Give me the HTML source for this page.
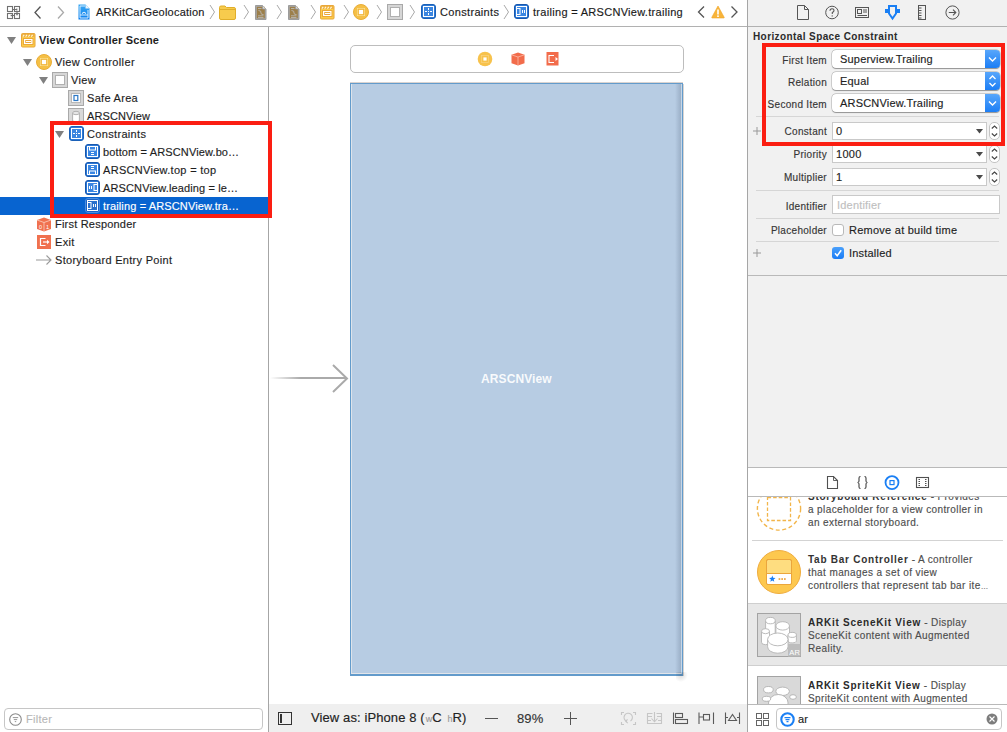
<!DOCTYPE html><html><head><meta charset="utf-8"><style>
html,body{margin:0;padding:0;}
body{width:1007px;height:732px;overflow:hidden;position:relative;background:#fff;font-family:"Liberation Sans",sans-serif;}
div,svg{box-sizing:border-box;}
div{-webkit-text-stroke:0.15px currentColor;}
b{-webkit-text-stroke:0;}
</style></head><body>
<div style="position:absolute;left:748px;top:0px;width:259px;height:732px;background:#f1f1f1"></div>
<div style="position:absolute;left:0px;top:26px;width:747px;height:1px;background:#b1b1b1"></div>
<div style="position:absolute;left:748px;top:26px;width:259px;height:1px;background:#b1b1b1"></div>
<div style="position:absolute;left:747px;top:0px;width:1px;height:732px;background:#a6a6a6"></div>
<div style="position:absolute;left:268px;top:27px;width:1px;height:705px;background:#a6a6a6"></div>
<div style="position:absolute;left:269px;top:704px;width:478px;height:28px;background:#efefef"></div>
<div style="position:absolute;left:748px;top:275px;width:259px;height:1px;background:#b9b9b9"></div>
<div style="position:absolute;left:748px;top:467px;width:259px;height:1px;background:#b9b9b9"></div>
<div style="position:absolute;left:748px;top:468px;width:259px;height:28px;background:#ffffff"></div>
<div style="position:absolute;left:748px;top:496px;width:259px;height:1px;background:#b9b9b9"></div>
<div style="position:absolute;left:748px;top:497px;width:259px;height:207px;background:#ffffff"></div>
<div style="position:absolute;left:748px;top:704px;width:259px;height:1px;background:#b9b9b9"></div>
<div style="position:absolute;left:748px;top:705px;width:259px;height:27px;background:#ffffff"></div>
<svg style="position:absolute;left:6px;top:5px" width="16" height="16" viewBox="0 0 16 16"><g fill="none" stroke="#707070" stroke-width="1.1"><rect x="1.5" y="1.5" width="5" height="5"/><rect x="8.5" y="1.5" width="5" height="5"/><rect x="1.5" y="8.5" width="5" height="5"/><rect x="8.5" y="8.5" width="5" height="5"/><path d="M6.5 4.5 H10.8 M10.8 3.6 V5.4 M11 6.5 V9.8 M10.2 9.8 H11.8 M8.5 10.5 H5.2 M5.2 9.7 V11.3"/></g></svg>
<svg style="position:absolute;left:32px;top:5px" width="12" height="16" viewBox="0 0 12 16"><path d="M8.5 1.5 L3 7.5 L8.5 13.5" fill="none" stroke="#555" stroke-width="1.3"/></svg>
<svg style="position:absolute;left:55px;top:5px" width="12" height="16" viewBox="0 0 12 16"><path d="M3 1.5 L8.5 7.5 L3 13.5" fill="none" stroke="#aaa" stroke-width="1.3"/></svg>
<svg style="position:absolute;left:78px;top:4px" width="12" height="16" viewBox="0 0 12 16"><defs><linearGradient id="fg" x1="0" y1="0" x2="0" y2="1"><stop offset="0" stop-color="#3aa8f2"/><stop offset="1" stop-color="#0a80f0"/></linearGradient></defs><path d="M0.5 0.5 H7.5 L11.5 4.5 V15.5 H0.5 Z" fill="url(#fg)"/><path d="M7.5 0.5 V4.5 H11.5" fill="#e8f2fb"/><path d="M2 14 V2 H7 M10 6 V14 H2 M2 11 H10" fill="none" stroke="#eaf5ff" stroke-width="0.9"/><path d="M4.2 9.6 Q6 6.8 7.8 9.6" fill="none" stroke="#eaf5ff" stroke-width="1.1"/></svg>
<div style="position:absolute;left:96px;top:7px;font-size:11px;line-height:11px;color:#1a1a1a;font-weight:normal;letter-spacing:0.21px;white-space:nowrap;">ARKitCarGeolocation</div>
<svg style="position:absolute;left:209px;top:4px" width="7" height="16" viewBox="0 0 7 16"><path d="M1 1 L5.5 8 L1 15" fill="none" stroke="#a9a9a9" stroke-width="1"/></svg>
<svg style="position:absolute;left:219px;top:5px" width="17" height="15" viewBox="0 0 17 15"><path d="M0.5 2.5 Q0.5 1 2 1 H6 L7.5 2.5 H15 Q16.5 2.5 16.5 4 V13 Q16.5 14.5 15 14.5 H2 Q0.5 14.5 0.5 13 Z" fill="#f7cb4d" stroke="#e0ae2a"/><path d="M0.5 4.5 H16.5" stroke="#e0ae2a"/></svg>
<svg style="position:absolute;left:243px;top:4px" width="7" height="16" viewBox="0 0 7 16"><path d="M1 1 L5.5 8 L1 15" fill="none" stroke="#a9a9a9" stroke-width="1"/></svg>
<svg style="position:absolute;left:255px;top:5px" width="12" height="15" viewBox="0 0 12 15"><path d="M0.5 0.5 H7.5 L11 4 V14.5 H0.5 Z" fill="#a9a9a9" stroke="#9c9c9c"/><rect x="1.8" y="1.8" width="8" height="11.5" fill="#9c7f4a"/><path d="M3 3.5 H6.5 M3 10.8 H8.5 M3 12.5 H8.5" stroke="#b9b6b0" stroke-width="0.9"/><path d="M3.5 5.5 Q6.5 5.5 6 8 Q5.8 9.8 8.5 9.5" fill="none" stroke="#b9b6b0" stroke-width="0.9"/><path d="M7.5 0.5 V4 H11" fill="#d8d8d8" stroke="#9c9c9c" stroke-width="0.8"/></svg>
<svg style="position:absolute;left:276px;top:4px" width="7" height="16" viewBox="0 0 7 16"><path d="M1 1 L5.5 8 L1 15" fill="none" stroke="#a9a9a9" stroke-width="1"/></svg>
<svg style="position:absolute;left:288px;top:5px" width="12" height="15" viewBox="0 0 12 15"><path d="M0.5 0.5 H7.5 L11 4 V14.5 H0.5 Z" fill="#a9a9a9" stroke="#9c9c9c"/><rect x="1.8" y="1.8" width="8" height="11.5" fill="#9c7f4a"/><path d="M3 3.5 H6.5 M3 10.8 H8.5 M3 12.5 H8.5" stroke="#b9b6b0" stroke-width="0.9"/><path d="M3.5 5.5 Q6.5 5.5 6 8 Q5.8 9.8 8.5 9.5" fill="none" stroke="#b9b6b0" stroke-width="0.9"/><path d="M7.5 0.5 V4 H11" fill="#d8d8d8" stroke="#9c9c9c" stroke-width="0.8"/></svg>
<svg style="position:absolute;left:310px;top:4px" width="7" height="16" viewBox="0 0 7 16"><path d="M1 1 L5.5 8 L1 15" fill="none" stroke="#a9a9a9" stroke-width="1"/></svg>
<svg style="position:absolute;left:320px;top:5px" width="15" height="15" viewBox="0 0 15 15"><rect x="0.5" y="0.5" width="13.5" height="13.5" rx="1" fill="#fccd4a" stroke="#e8a63a"/><rect x="1" y="1" width="12.5" height="3" fill="#eeb03e"/><path d="M1.8 3.6 L3.2 1.8 M4.6 3.6 L6 1.8 M7.4 3.6 L8.8 1.8 M10.2 3.6 L11.6 1.8" stroke="#fff6dc" stroke-width="1.1"/><rect x="2.5" y="5.5" width="9.5" height="6" fill="#fff" stroke="#eba73a"/><rect x="4.75" y="7.5" width="5" height="2" fill="#fff" stroke="#eba73a"/></svg>
<svg style="position:absolute;left:343px;top:4px" width="7" height="16" viewBox="0 0 7 16"><path d="M1 1 L5.5 8 L1 15" fill="none" stroke="#a9a9a9" stroke-width="1"/></svg>
<svg style="position:absolute;left:353px;top:4px" width="16" height="16" viewBox="0 0 16 16"><circle cx="8" cy="8" r="7.5" fill="#f5c046" stroke="#e9ad37" stroke-width="1"/><rect x="4" y="4" width="8" height="8" fill="#fde7a1"/><rect x="5.2" y="5.2" width="5.6" height="5.6" fill="none" stroke="#f0b43c" stroke-width="1.2"/><rect x="6" y="6" width="4" height="4" fill="#fff"/></svg>
<svg style="position:absolute;left:376px;top:4px" width="7" height="16" viewBox="0 0 7 16"><path d="M1 1 L5.5 8 L1 15" fill="none" stroke="#a9a9a9" stroke-width="1"/></svg>
<svg style="position:absolute;left:387px;top:4px" width="16" height="16" viewBox="0 0 16 16"><rect x="0.5" y="0.5" width="15" height="15" fill="#d6d6d6" stroke="#a9a9a9"/><rect x="3.5" y="3.5" width="9" height="9" fill="#fff" stroke="#b0b0b0"/></svg>
<svg style="position:absolute;left:409px;top:4px" width="7" height="16" viewBox="0 0 7 16"><path d="M1 1 L5.5 8 L1 15" fill="none" stroke="#a9a9a9" stroke-width="1"/></svg>
<svg style="position:absolute;left:421px;top:4px" width="15" height="15" viewBox="0 0 15 15"><rect x="0.5" y="0.5" width="14" height="14" rx="2.5" fill="#2e7ad6" stroke="#1b61b8"/><rect x="2.5" y="2.5" width="10" height="10" fill="#3b86e0" stroke="#fff"/><path d="M7.5 4 V6 M7.5 9 V11 M4 7.5 H6 M9 7.5 H11" stroke="#fff" stroke-width="1"/><rect x="7" y="7" width="1" height="1" fill="#fff"/></svg>
<div style="position:absolute;left:440px;top:7px;font-size:11px;line-height:11px;color:#1a1a1a;font-weight:normal;letter-spacing:0.33px;white-space:nowrap;">Constraints</div>
<svg style="position:absolute;left:503px;top:4px" width="7" height="16" viewBox="0 0 7 16"><path d="M1 1 L5.5 8 L1 15" fill="none" stroke="#a9a9a9" stroke-width="1"/></svg>
<svg style="position:absolute;left:514px;top:4px" width="15" height="15" viewBox="0 0 15 15"><rect x="0.5" y="0.5" width="14" height="14" rx="2.5" fill="#2c78d6" stroke="#1858ae"/><rect x="2.5" y="2.5" width="10" height="10" fill="#3a86e2" stroke="#fff"/><rect x="2.5" y="4.5" width="3.5" height="6" fill="none" stroke="#fff"/><path d="M8.5 6 V9 M10.5 6 V9" stroke="#fff"/></svg>
<div style="position:absolute;left:533px;top:7px;font-size:11px;line-height:11px;color:#1a1a1a;font-weight:normal;letter-spacing:0.3px;white-space:nowrap;">trailing = ARSCNView.trailing</div>
<svg style="position:absolute;left:696px;top:5px" width="11" height="16" viewBox="0 0 11 16"><path d="M8 1.5 L2.5 7 L8 12.5" fill="none" stroke="#555" stroke-width="1.3"/></svg>
<svg style="position:absolute;left:711px;top:5px" width="14" height="14" viewBox="0 0 14 14"><path d="M7 1 L13.2 12.3 Q13.5 13 12.7 13 H1.3 Q0.5 13 0.8 12.3 Z" fill="#f8b43a" stroke="#f0a62a" stroke-width="0.6"/><rect x="6.2" y="4.5" width="1.6" height="5" fill="#fff"/><rect x="6.2" y="10.4" width="1.6" height="1.6" fill="#fff"/></svg>
<svg style="position:absolute;left:729px;top:5px" width="11" height="16" viewBox="0 0 11 16"><path d="M2.5 1.5 L8 7 L2.5 12.5" fill="none" stroke="#555" stroke-width="1.3"/></svg>
<svg style="position:absolute;left:7px;top:37px" width="9" height="7" viewBox="0 0 9 7"><path d="M0 0 H9 L4.5 7 Z" fill="#808080"/></svg>
<svg style="position:absolute;left:21px;top:33px" width="15" height="15" viewBox="0 0 15 15"><rect x="0.5" y="0.5" width="13.5" height="13.5" rx="1" fill="#fccd4a" stroke="#e8a63a"/><rect x="1" y="1" width="12.5" height="3" fill="#eeb03e"/><path d="M1.8 3.6 L3.2 1.8 M4.6 3.6 L6 1.8 M7.4 3.6 L8.8 1.8 M10.2 3.6 L11.6 1.8" stroke="#fff6dc" stroke-width="1.1"/><rect x="2.5" y="5.5" width="9.5" height="6" fill="#fff" stroke="#eba73a"/><rect x="4.75" y="7.5" width="5" height="2" fill="#fff" stroke="#eba73a"/></svg>
<div style="position:absolute;left:39px;top:35px;font-size:11px;line-height:11px;color:#1e1e1e;font-weight:bold;letter-spacing:0.2px;white-space:nowrap;-webkit-text-stroke:0;">View Controller Scene</div>
<svg style="position:absolute;left:23px;top:59px" width="9" height="7" viewBox="0 0 9 7"><path d="M0 0 H9 L4.5 7 Z" fill="#808080"/></svg>
<svg style="position:absolute;left:36px;top:54px" width="16" height="16" viewBox="0 0 16 16"><circle cx="8" cy="8" r="7.5" fill="#f5c046" stroke="#e9ad37" stroke-width="1"/><rect x="4" y="4" width="8" height="8" fill="#fde7a1"/><rect x="5.2" y="5.2" width="5.6" height="5.6" fill="none" stroke="#f0b43c" stroke-width="1.2"/><rect x="6" y="6" width="4" height="4" fill="#fff"/></svg>
<div style="position:absolute;left:55px;top:57px;font-size:11px;line-height:11px;color:#1e1e1e;font-weight:normal;letter-spacing:0.37px;white-space:nowrap;">View Controller</div>
<svg style="position:absolute;left:39px;top:77px" width="9" height="7" viewBox="0 0 9 7"><path d="M0 0 H9 L4.5 7 Z" fill="#808080"/></svg>
<svg style="position:absolute;left:52px;top:72px" width="16" height="16" viewBox="0 0 16 16"><rect x="0.5" y="0.5" width="15" height="15" fill="#d6d6d6" stroke="#a9a9a9"/><rect x="3.5" y="3.5" width="9" height="9" fill="#fff" stroke="#b0b0b0"/></svg>
<div style="position:absolute;left:71px;top:75px;font-size:11px;line-height:11px;color:#1e1e1e;font-weight:normal;letter-spacing:0.37px;white-space:nowrap;">View</div>
<svg style="position:absolute;left:68px;top:90px" width="16" height="16" viewBox="0 0 16 16"><rect x="0.5" y="0.5" width="15" height="15" fill="#d6d6d6" stroke="#a9a9a9"/><rect x="3.5" y="3.5" width="9" height="9" fill="#fff" stroke="#b8b8b8"/><rect x="6" y="5.5" width="3.8" height="5" fill="none" stroke="#2b78c6" stroke-width="1.2"/></svg>
<div style="position:absolute;left:87px;top:93px;font-size:11px;line-height:11px;color:#1e1e1e;font-weight:normal;letter-spacing:0.3px;white-space:nowrap;">Safe Area</div>
<svg style="position:absolute;left:68px;top:108px" width="16" height="16" viewBox="0 0 16 16"><rect x="0.5" y="0.5" width="15" height="15" fill="#d9d9d9" stroke="#a9a9a9"/><path d="M4.6 5 V13 Q8 15 11.4 13 V5" fill="#fff" stroke="#aaa" stroke-width="0.9"/><ellipse cx="8" cy="5" rx="3.4" ry="1.7" fill="#e6e6e6" stroke="#aaa" stroke-width="0.9"/></svg>
<div style="position:absolute;left:87px;top:111px;font-size:11px;line-height:11px;color:#1e1e1e;font-weight:normal;letter-spacing:0.1px;white-space:nowrap;">ARSCNView</div>
<div style="position:absolute;left:0px;top:197px;width:268px;height:18px;background:#0864d0"></div>
<svg style="position:absolute;left:55px;top:131px" width="9" height="7" viewBox="0 0 9 7"><path d="M0 0 H9 L4.5 7 Z" fill="#808080"/></svg>
<svg style="position:absolute;left:69px;top:126px" width="15" height="15" viewBox="0 0 15 15"><rect x="0.5" y="0.5" width="14" height="14" rx="2.5" fill="#2e7ad6" stroke="#1b61b8"/><rect x="2.5" y="2.5" width="10" height="10" fill="#3b86e0" stroke="#fff"/><path d="M7.5 4 V6 M7.5 9 V11 M4 7.5 H6 M9 7.5 H11" stroke="#fff" stroke-width="1"/><rect x="7" y="7" width="1" height="1" fill="#fff"/></svg>
<div style="position:absolute;left:87px;top:129px;font-size:11px;line-height:11px;color:#1e1e1e;font-weight:normal;letter-spacing:0.33px;white-space:nowrap;">Constraints</div>
<svg style="position:absolute;left:85px;top:144px" width="15" height="15" viewBox="0 0 15 15"><rect x="0.5" y="0.5" width="14" height="14" rx="2.5" fill="#2c78d6" stroke="#1858ae"/><rect x="2.5" y="2.5" width="10" height="10" fill="#3a86e2" stroke="#fff"/><rect x="4.5" y="2.5" width="6" height="3.5" fill="none" stroke="#fff"/><path d="M6 8.5 H9 M6 10.5 H9" stroke="#fff"/></svg>
<div style="position:absolute;left:103px;top:147px;font-size:11px;line-height:11px;color:#1e1e1e;font-weight:normal;letter-spacing:0.13px;white-space:nowrap;">bottom = ARSCNView.bo…</div>
<svg style="position:absolute;left:85px;top:162px" width="15" height="15" viewBox="0 0 15 15"><rect x="0.5" y="0.5" width="14" height="14" rx="2.5" fill="#2c78d6" stroke="#1858ae"/><rect x="2.5" y="2.5" width="10" height="10" fill="#3a86e2" stroke="#fff"/><rect x="4.5" y="9" width="6" height="3.5" fill="none" stroke="#fff"/><path d="M6 4.5 H9 M6 6.5 H9" stroke="#fff"/></svg>
<div style="position:absolute;left:103px;top:165px;font-size:11px;line-height:11px;color:#1e1e1e;font-weight:normal;letter-spacing:0.3px;white-space:nowrap;">ARSCNView.top = top</div>
<svg style="position:absolute;left:85px;top:180px" width="15" height="15" viewBox="0 0 15 15"><rect x="0.5" y="0.5" width="14" height="14" rx="2.5" fill="#2c78d6" stroke="#1858ae"/><rect x="2.5" y="2.5" width="10" height="10" fill="#3a86e2" stroke="#fff"/><rect x="9" y="4.5" width="3.5" height="6" fill="none" stroke="#fff"/><path d="M4.5 6 V9 M6.5 6 V9" stroke="#fff"/></svg>
<div style="position:absolute;left:103px;top:183px;font-size:11px;line-height:11px;color:#1e1e1e;font-weight:normal;letter-spacing:0.13px;white-space:nowrap;">ARSCNView.leading = le…</div>
<svg style="position:absolute;left:85px;top:198px" width="15" height="15" viewBox="0 0 15 15"><rect x="0.5" y="0.5" width="14" height="14" rx="2.5" fill="#1a62c4" stroke="#4d8ee0"/><rect x="2.5" y="2.5" width="10" height="10" fill="#2a70cc" stroke="#fff"/><rect x="2.5" y="4.5" width="3.5" height="6" fill="none" stroke="#fff"/><path d="M8.5 6 V9 M10.5 6 V9" stroke="#fff"/></svg>
<div style="position:absolute;left:103px;top:201px;font-size:11px;line-height:11px;color:#ffffff;font-weight:normal;letter-spacing:0.13px;white-space:nowrap;">trailing = ARSCNView.tra…</div>
<svg style="position:absolute;left:36px;top:217px" width="16" height="15" viewBox="0 0 16 15"><path d="M8 0.5 L15 3 V12 L8 14.5 L1 12 V3 Z" fill="#f0714f"/><path d="M1 3 L8 5.5 L15 3 M8 5.5 V14.5" stroke="#fbd0c0" stroke-width="0.8" fill="none"/><text x="3" y="11.5" font-size="5.5" fill="#fff" font-family="Liberation Sans">0</text><text x="10" y="11.5" font-size="5.5" fill="#fff" font-family="Liberation Sans">1</text></svg>
<div style="position:absolute;left:55px;top:219px;font-size:11px;line-height:11px;color:#1e1e1e;font-weight:normal;letter-spacing:0.21px;white-space:nowrap;">First Responder</div>
<svg style="position:absolute;left:37px;top:235px" width="14" height="14" viewBox="0 0 14 14"><rect x="0" y="0" width="14" height="14" fill="#f0714f"/><path d="M8.5 3.5 H3.5 V10.5 H8.5" fill="none" stroke="#fff" stroke-width="1.2"/><path d="M6 7 H10.5" stroke="#fff" stroke-width="1.2"/><path d="M10 4.8 L12.5 7 L10 9.2 Z" fill="#fff"/></svg>
<div style="position:absolute;left:55px;top:237px;font-size:11px;line-height:11px;color:#1e1e1e;font-weight:normal;letter-spacing:0.3px;white-space:nowrap;">Exit</div>
<svg style="position:absolute;left:36px;top:255px" width="16" height="10" viewBox="0 0 16 10"><path d="M0 5 H15 M10.5 0.5 L15 5 L10.5 9.5" fill="none" stroke="#9a9a9a" stroke-width="1.1"/></svg>
<div style="position:absolute;left:55px;top:255px;font-size:11px;line-height:11px;color:#1e1e1e;font-weight:normal;letter-spacing:0.3px;white-space:nowrap;">Storyboard Entry Point</div>
<div style="position:absolute;left:50px;top:121px;width:222px;height:97px;border:4px solid #fb1e12"></div>
<div style="position:absolute;left:4px;top:708px;width:259px;height:22px;background:#fff;border:1px solid #c6c6c6;border-radius:4px"></div>
<svg style="position:absolute;left:9px;top:713px" width="14" height="14" viewBox="0 0 14 14"><circle cx="6.5" cy="6.5" r="5.8" fill="none" stroke="#8a8a8a" stroke-width="1.1"/><path d="M3.8 4.6 H9.2 M4.8 6.6 H8.2 M5.8 8.6 H7.2" stroke="#8a8a8a" stroke-width="0.9"/></svg>
<div style="position:absolute;left:26px;top:714px;font-size:11px;line-height:11px;color:#b8b8b8;font-weight:normal;letter-spacing:0.3px;white-space:nowrap;">Filter</div>
<div style="position:absolute;left:350px;top:45px;width:334px;height:28px;border:1px solid #bdbdbd;border-radius:5px;background:#fff"></div>
<svg style="position:absolute;left:477px;top:51px" width="16" height="16" viewBox="0 0 16 16"><circle cx="8" cy="8" r="7.3" fill="#f7c24c"/><rect x="4.5" y="4.5" width="7" height="7" fill="none" stroke="#f9d27a" stroke-width="0.8"/><rect x="6.4" y="6.4" width="3.2" height="3.2" fill="#fff"/></svg>
<svg style="position:absolute;left:511px;top:52px" width="14" height="14" viewBox="0 0 14 14"><path d="M7 0.5 L13.5 2.8 V11.2 L7 13.5 L0.5 11.2 V2.8 Z" fill="#f26c4b"/><path d="M0.5 2.8 L7 5 L13.5 2.8 M7 5 V13.5" stroke="#fbc5b4" stroke-width="0.7" fill="none"/></svg>
<svg style="position:absolute;left:546px;top:52px" width="13" height="14" viewBox="0 0 13 14"><rect x="0.5" y="0" width="12" height="13.5" fill="#f26c4b"/><path d="M8 3.5 H3 V10.5 H8" fill="none" stroke="#fff" stroke-width="1.1"/><path d="M9.5 5 L12 7 L9.5 9 Z" fill="#fff"/></svg>
<div style="position:absolute;left:350px;top:82px;width:333px;height:1px;background:rgba(150,130,120,0.35)"></div>
<div style="position:absolute;left:350px;top:83px;width:333px;height:593px;background:#b7cce3;border:1px solid #639bcb;border-bottom-width:2px"></div>
<div style="position:absolute;left:351px;top:84px;width:1px;height:589px;background:#dde3ea"></div>
<div style="position:absolute;left:351px;top:673px;width:330px;height:1px;background:#e2e5ea"></div>
<div style="position:absolute;left:681px;top:84px;width:1px;height:590px;background:#c6d7e8"></div>
<div style="position:absolute;left:675px;top:84px;width:6px;height:589px;background:linear-gradient(90deg,rgba(120,140,165,0),rgba(120,140,165,0.45))"></div>
<div style="position:absolute;left:683px;top:84px;width:1px;height:592px;background:#d9d4d0"></div>
<div style="position:absolute;left:676px;top:672px;width:12px;height:10px;background:radial-gradient(circle at 40% 30%,rgba(0,0,0,0.14),rgba(0,0,0,0) 70%)"></div>
<div style="position:absolute;left:481px;top:373px;font-size:12px;line-height:12px;color:rgba(255,255,255,0.92);font-weight:bold;letter-spacing:0.1px;white-space:nowrap;-webkit-text-stroke:0;">ARSCNView</div>
<div style="position:absolute;left:270px;top:377px;width:77px;height:2px;background:linear-gradient(90deg,rgba(170,170,170,0),#aaa 40%,#aaa)"></div>
<svg style="position:absolute;left:331px;top:363px" width="19" height="31" viewBox="0 0 19 31"><path d="M2 2 L16 15.5 L2 29" fill="none" stroke="#aaa" stroke-width="2"/></svg>
<svg style="position:absolute;left:278px;top:712px" width="14" height="13" viewBox="0 0 14 13"><rect x="0.5" y="0.5" width="13" height="12" fill="none" stroke="#333" stroke-width="1"/><rect x="2" y="2" width="2" height="9" fill="#333"/></svg>
<div style="position:absolute;left:311px;top:711px;font-size:13px;line-height:13px;color:#222;white-space:nowrap;letter-spacing:0.1px">View as: iPhone 8 (<span style="font-size:9px;color:#999;margin-left:1px">w</span>C <span style="font-size:9px;color:#999;margin-left:2px">h</span>R)</div>
<div style="position:absolute;left:485px;top:718px;width:13px;height:1px;background:#555"></div>
<div style="position:absolute;left:517px;top:712px;font-size:13px;line-height:13px;color:#333;font-weight:normal;letter-spacing:0.1px;white-space:nowrap;">89%</div>
<div style="position:absolute;left:564px;top:718px;width:13px;height:1px;background:#555"></div>
<div style="position:absolute;left:570px;top:712px;width:1px;height:13px;background:#555"></div>
<svg style="position:absolute;left:620px;top:711px" width="17" height="15" viewBox="0 0 17 15"><g fill="none" stroke="#c6c6c6" stroke-width="1.1"><path d="M1.5 4 V1.5 H4 M13 1.5 H15.5 V4 M15.5 11 V13.5 H13 M4 13.5 H1.5 V11"/><path d="M7 10.5 A4.2 4.2 0 1 1 10.5 10 M7.5 8.3 L5.8 10.4 L7.8 12.2"/></g></svg>
<svg style="position:absolute;left:646px;top:711px" width="17" height="15" viewBox="0 0 17 15"><g fill="none" stroke="#c6c6c6" stroke-width="1.1"><path d="M6.5 2.5 H1.5 V12.5 H15.5 V2.5 H10.5 M1.5 5.5 H6 M11 5.5 H15.5 M1.5 9.5 H5 M12 9.5 H15.5"/><path d="M8.5 1 V11 M5.5 7.5 L8.5 10.8 L11.5 7.5"/></g></svg>
<svg style="position:absolute;left:672px;top:712px" width="17" height="13" viewBox="0 0 17 13"><g fill="none" stroke="#5a5a5a" stroke-width="1.1"><path d="M1.5 0.5 V12"/><rect x="3.5" y="1.5" width="7" height="4"/><rect x="3.5" y="7.5" width="12" height="4"/></g></svg>
<svg style="position:absolute;left:698px;top:712px" width="17" height="13" viewBox="0 0 17 13"><g fill="none" stroke="#5a5a5a" stroke-width="1.1"><path d="M1 0.5 V12 M15.5 0.5 V12 M1 5 H5.5"/><rect x="5.5" y="2.5" width="6" height="5.5"/></g></svg>
<svg style="position:absolute;left:724px;top:712px" width="17" height="13" viewBox="0 0 17 13"><g fill="none" stroke="#5a5a5a" stroke-width="1.1"><path d="M1.5 0.5 V12 M15.5 0.5 V12 M1.5 5.5 H4 M13 5.5 H15.5"/><path d="M4.5 8.5 L8.5 2.5 L12.5 8.5 Z"/></g></svg>
<svg style="position:absolute;left:797px;top:5px" width="12" height="15" viewBox="0 0 12 15"><path d="M0.5 0.5 H7.5 L11.5 4.5 V14.5 H0.5 Z M7.5 0.5 V4.5 H11.5" fill="none" stroke="#555" stroke-width="1"/></svg>
<svg style="position:absolute;left:825px;top:5px" width="14" height="15" viewBox="0 0 14 15"><circle cx="7" cy="7.5" r="6.3" fill="none" stroke="#555" stroke-width="1"/><path d="M5 5.8 Q5 3.7 7 3.7 Q9 3.7 9 5.6 Q9 6.8 7.3 7.6 V9" fill="none" stroke="#555" stroke-width="1.1"/><circle cx="7.2" cy="10.9" r="0.7" fill="#555"/></svg>
<svg style="position:absolute;left:855px;top:5px" width="14" height="15" viewBox="0 0 14 15"><rect x="0.5" y="2.5" width="13" height="10" fill="none" stroke="#555"/><rect x="2.5" y="4.5" width="4" height="4" fill="none" stroke="#555"/><path d="M8 5 H12 M8 7 H12 M2.5 10.5 H12" stroke="#555"/></svg>
<svg style="position:absolute;left:884px;top:4px" width="17" height="17" viewBox="0 0 17 17"><rect x="1" y="5" width="4" height="4" fill="#1a7ff4"/><rect x="12" y="5" width="4" height="4" fill="#1a7ff4"/><path d="M5 2 H12 V9.5 L8.5 14.5 L5 9.5 Z" fill="none" stroke="#1a7ff4" stroke-width="2"/></svg>
<svg style="position:absolute;left:918px;top:5px" width="9" height="15" viewBox="0 0 9 15"><rect x="0.5" y="0.5" width="7" height="14" fill="none" stroke="#555"/><path d="M0.5 3 H3.5 M0.5 5.5 H3.5 M0.5 8 H3.5 M0.5 10.5 H3.5 M0.5 13 H3.5" stroke="#555"/></svg>
<svg style="position:absolute;left:945px;top:5px" width="15" height="15" viewBox="0 0 15 15"><circle cx="7.5" cy="7.5" r="6.6" fill="none" stroke="#555"/><path d="M3.8 7.5 H10.8 M8 4.7 L10.8 7.5 L8 10.3" fill="none" stroke="#555" stroke-width="1.1"/></svg>
<div style="position:absolute;left:753px;top:32px;font-size:10px;line-height:10px;color:#2b2b2b;font-weight:bold;letter-spacing:0.4px;white-space:nowrap;-webkit-text-stroke:0;">Horizontal Space Constraint</div>
<div style="position:absolute;right:180px;top:56px;font-size:10px;line-height:10px;color:#363636;font-weight:normal;letter-spacing:0.3px;white-space:nowrap;">First Item</div>
<div style="position:absolute;left:832px;top:50px;width:168px;height:18px;background:#fff;border-radius:4px;box-shadow:0 0 0 0.5px rgba(0,0,0,0.25), 0 0.5px 1px rgba(0,0,0,0.3)"></div>
<div style="position:absolute;left:985px;top:50px;width:15px;height:18px;background:linear-gradient(#58a6fb,#1c7ef5);border-radius:0 4px 4px 0"></div>
<svg style="position:absolute;left:985px;top:50px" width="15" height="18" viewBox="0 0 15 18"><path d="M4 7.5 L7.5 11 L11 7.5" fill="none" stroke="#fff" stroke-width="1.4"/></svg>
<div style="position:absolute;left:840px;top:54px;font-size:11px;line-height:11px;color:#1e1e1e;font-weight:normal;letter-spacing:0.19px;white-space:nowrap;">Superview.Trailing</div>
<div style="position:absolute;right:180px;top:78px;font-size:10px;line-height:10px;color:#363636;font-weight:normal;letter-spacing:0.3px;white-space:nowrap;">Relation</div>
<div style="position:absolute;left:832px;top:72px;width:168px;height:18px;background:#fff;border-radius:4px;box-shadow:0 0 0 0.5px rgba(0,0,0,0.25), 0 0.5px 1px rgba(0,0,0,0.3)"></div>
<div style="position:absolute;left:985px;top:72px;width:15px;height:18px;background:linear-gradient(#58a6fb,#1c7ef5);border-radius:0 4px 4px 0"></div>
<svg style="position:absolute;left:985px;top:72px" width="15" height="18" viewBox="0 0 15 18"><path d="M4.5 7 L7.5 4 L10.5 7 M4.5 11 L7.5 14 L10.5 11" fill="none" stroke="#fff" stroke-width="1.3"/></svg>
<div style="position:absolute;left:840px;top:76px;font-size:11px;line-height:11px;color:#1e1e1e;font-weight:normal;letter-spacing:0.19px;white-space:nowrap;">Equal</div>
<div style="position:absolute;right:180px;top:100px;font-size:10px;line-height:10px;color:#363636;font-weight:normal;letter-spacing:0.3px;white-space:nowrap;">Second Item</div>
<div style="position:absolute;left:832px;top:94px;width:168px;height:18px;background:#fff;border-radius:4px;box-shadow:0 0 0 0.5px rgba(0,0,0,0.25), 0 0.5px 1px rgba(0,0,0,0.3)"></div>
<div style="position:absolute;left:985px;top:94px;width:15px;height:18px;background:linear-gradient(#58a6fb,#1c7ef5);border-radius:0 4px 4px 0"></div>
<svg style="position:absolute;left:985px;top:94px" width="15" height="18" viewBox="0 0 15 18"><path d="M4 7.5 L7.5 11 L11 7.5" fill="none" stroke="#fff" stroke-width="1.4"/></svg>
<div style="position:absolute;left:840px;top:98px;font-size:11px;line-height:11px;color:#1e1e1e;font-weight:normal;letter-spacing:0.19px;white-space:nowrap;">ARSCNView.Trailing</div>
<div style="position:absolute;left:756px;top:116px;width:243px;height:1px;background:#d6d6d6"></div>
<svg style="position:absolute;left:753px;top:127px" width="8" height="8" viewBox="0 0 8 8"><path d="M4 0 V8 M0 4 H8" stroke="#999" stroke-width="1"/></svg>
<div style="position:absolute;right:180px;top:127px;font-size:10px;line-height:10px;color:#363636;font-weight:normal;letter-spacing:0.3px;white-space:nowrap;">Constant</div>
<div style="position:absolute;left:832px;top:122px;width:155px;height:18px;background:#fff;border:1px solid #c9c9c9"></div>
<svg style="position:absolute;left:976px;top:129px" width="7" height="5" viewBox="0 0 7 5"><path d="M0 0 H7 L3.5 4.5 Z" fill="#4a4a4a"/></svg>
<div style="position:absolute;left:836px;top:126px;font-size:11px;line-height:11px;color:#1e1e1e;font-weight:normal;letter-spacing:0.3px;white-space:nowrap;">0</div>
<div style="position:absolute;left:989px;top:122px;width:11px;height:18px;background:#fff;border-radius:5px;border:1px solid #c4c4c4"></div>
<svg style="position:absolute;left:989px;top:122px" width="11" height="18" viewBox="0 0 11 18"><path d="M2.8 6.5 L5.5 4 L8.2 6.5 M2.8 11.5 L5.5 14 L8.2 11.5" fill="none" stroke="#444" stroke-width="1.1"/></svg>
<div style="position:absolute;right:180px;top:150px;font-size:10px;line-height:10px;color:#363636;font-weight:normal;letter-spacing:0.3px;white-space:nowrap;">Priority</div>
<div style="position:absolute;left:832px;top:145px;width:155px;height:18px;background:#fff;border:1px solid #c9c9c9"></div>
<svg style="position:absolute;left:976px;top:152px" width="7" height="5" viewBox="0 0 7 5"><path d="M0 0 H7 L3.5 4.5 Z" fill="#4a4a4a"/></svg>
<div style="position:absolute;left:836px;top:149px;font-size:11px;line-height:11px;color:#1e1e1e;font-weight:normal;letter-spacing:0.3px;white-space:nowrap;">1000</div>
<div style="position:absolute;left:989px;top:145px;width:11px;height:18px;background:#fff;border-radius:5px;border:1px solid #c4c4c4"></div>
<svg style="position:absolute;left:989px;top:145px" width="11" height="18" viewBox="0 0 11 18"><path d="M2.8 6.5 L5.5 4 L8.2 6.5 M2.8 11.5 L5.5 14 L8.2 11.5" fill="none" stroke="#444" stroke-width="1.1"/></svg>
<div style="position:absolute;right:180px;top:173px;font-size:10px;line-height:10px;color:#363636;font-weight:normal;letter-spacing:0.3px;white-space:nowrap;">Multiplier</div>
<div style="position:absolute;left:832px;top:168px;width:155px;height:18px;background:#fff;border:1px solid #c9c9c9"></div>
<svg style="position:absolute;left:976px;top:175px" width="7" height="5" viewBox="0 0 7 5"><path d="M0 0 H7 L3.5 4.5 Z" fill="#4a4a4a"/></svg>
<div style="position:absolute;left:836px;top:172px;font-size:11px;line-height:11px;color:#1e1e1e;font-weight:normal;letter-spacing:0.3px;white-space:nowrap;">1</div>
<div style="position:absolute;left:989px;top:168px;width:11px;height:18px;background:#fff;border-radius:5px;border:1px solid #c4c4c4"></div>
<svg style="position:absolute;left:989px;top:168px" width="11" height="18" viewBox="0 0 11 18"><path d="M2.8 6.5 L5.5 4 L8.2 6.5 M2.8 11.5 L5.5 14 L8.2 11.5" fill="none" stroke="#444" stroke-width="1.1"/></svg>
<div style="position:absolute;left:756px;top:190px;width:243px;height:1px;background:#d6d6d6"></div>
<div style="position:absolute;right:180px;top:202px;font-size:10px;line-height:10px;color:#363636;font-weight:normal;letter-spacing:0.3px;white-space:nowrap;">Identifier</div>
<div style="position:absolute;left:832px;top:195px;width:168px;height:19px;background:#fff;border:1px solid #c9c9c9"></div>
<div style="position:absolute;left:837px;top:200px;font-size:11px;line-height:11px;color:#c0c0c0;font-weight:normal;letter-spacing:0.2px;white-space:nowrap;">Identifier</div>
<div style="position:absolute;left:756px;top:218px;width:243px;height:1px;background:#d6d6d6"></div>
<div style="position:absolute;right:180px;top:226px;font-size:10px;line-height:10px;color:#363636;font-weight:normal;letter-spacing:0.3px;white-space:nowrap;">Placeholder</div>
<div style="position:absolute;left:832px;top:224px;width:12px;height:12px;background:#fff;border-radius:3px;border:1px solid #b9b9b9"></div>
<div style="position:absolute;left:849px;top:225px;font-size:11px;line-height:11px;color:#1e1e1e;font-weight:normal;letter-spacing:0.25px;white-space:nowrap;">Remove at build time</div>
<div style="position:absolute;left:756px;top:241px;width:243px;height:1px;background:#d6d6d6"></div>
<svg style="position:absolute;left:753px;top:249px" width="8" height="8" viewBox="0 0 8 8"><path d="M4 0 V8 M0 4 H8" stroke="#999" stroke-width="1"/></svg>
<div style="position:absolute;left:832px;top:247px;width:12px;height:12px;background:linear-gradient(#4aa0fb,#1a7cf5);border-radius:3px"></div>
<svg style="position:absolute;left:832px;top:247px" width="12" height="12" viewBox="0 0 12 12"><path d="M3 6.3 L5.2 8.8 L9.2 3.2" fill="none" stroke="#fff" stroke-width="1.5"/></svg>
<div style="position:absolute;left:849px;top:248px;font-size:11px;line-height:11px;color:#1e1e1e;font-weight:normal;letter-spacing:0.2px;white-space:nowrap;">Installed</div>
<div style="position:absolute;left:762px;top:43px;width:243px;height:103px;border:4px solid #fb1e12"></div>
<svg style="position:absolute;left:826px;top:475px" width="13" height="15" viewBox="0 0 13 15"><path d="M1.5 1.5 H7.5 L11.5 5.5 V13.5 H1.5 Z" fill="none" stroke="#505050" stroke-width="1.1"/><path d="M7.5 1.5 V5.5 H11.5" fill="none" stroke="#505050" stroke-width="0.9"/></svg>
<svg style="position:absolute;left:856px;top:475px" width="13" height="15" viewBox="0 0 13 15"><path d="M4.5 1.5 Q3 1.5 3 3 V6 Q3 7.5 1.5 7.5 Q3 7.5 3 9 V12 Q3 13.5 4.5 13.5 M8.5 1.5 Q10 1.5 10 3 V6 Q10 7.5 11.5 7.5 Q10 7.5 10 9 V12 Q10 13.5 8.5 13.5" fill="none" stroke="#404040" stroke-width="1.1"/></svg>
<svg style="position:absolute;left:884px;top:475px" width="16" height="16" viewBox="0 0 16 16"><circle cx="8" cy="7.6" r="6.5" fill="none" stroke="#1a7ff4" stroke-width="1.8"/><rect x="6" y="5.6" width="4" height="4" fill="none" stroke="#1a7ff4" stroke-width="1.2"/></svg>
<svg style="position:absolute;left:915px;top:476px" width="15" height="13" viewBox="0 0 15 13"><rect x="1.5" y="1.5" width="12" height="10" fill="none" stroke="#505050" stroke-width="1.1"/><path d="M3.5 3.5 H5 M3.5 5.5 H5 M3.5 7.5 H5 M3.5 9.5 H5 M10 3.5 H11.5 M10 5.5 H11.5 M10 7.5 H11.5 M10 9.5 H11.5" stroke="#505050" stroke-width="1"/></svg>
<div style="position:absolute;left:748px;top:497px;width:259px;height:207px;overflow:hidden">
<svg style="position:absolute;left:8px;top:-11px" width="46" height="46"><circle cx="23" cy="22.5" r="21.6" fill="none" stroke="#f2b54a" stroke-width="1.4" stroke-dasharray="4 2.6"/><rect x="11.5" y="11.5" width="23" height="23" fill="none" stroke="#f2b54a" stroke-width="1.3" stroke-dasharray="3.6 2"/></svg>
<div style="position:absolute;left:60px;top:-5px;font-size:10px;line-height:10px;color:#4e4e4e;font-weight:normal;letter-spacing:0.39px;white-space:nowrap"><b style="color:#333;letter-spacing:0.75px">Storyboard Reference</b> - Provides</div>
<div style="position:absolute;left:60px;top:8px;font-size:10px;line-height:10px;color:#4e4e4e;font-weight:normal;letter-spacing:0.39px;white-space:nowrap">a placeholder for a view controller in</div>
<div style="position:absolute;left:60px;top:21px;font-size:10px;line-height:10px;color:#4e4e4e;font-weight:normal;letter-spacing:0.39px;white-space:nowrap">an external storyboard.</div>
<div style="position:absolute;left:4px;top:43px;width:251px;height:1px;background:#d3d3d3"></div>
<svg style="position:absolute;left:8px;top:52px" width="46" height="46"><circle cx="23" cy="23" r="21.5" fill="#fdc84f" stroke="#efac3d"/><rect x="10.5" y="10.5" width="25" height="25" rx="1.5" fill="#fedd80" stroke="#eba63c"/><rect x="11" y="24.5" width="24" height="10.5" fill="#fff"/><path d="M10.5 24.5 H35.5" stroke="#eba63c"/><rect x="10.5" y="10.5" width="25" height="25" rx="1.5" fill="none" stroke="#eba63c"/><path d="M16.30 26.60 L17.15 28.83 L19.53 28.95 L17.68 30.45 L18.30 32.75 L16.30 31.45 L14.30 32.75 L14.92 30.45 L13.07 28.95 L15.45 28.83 Z" fill="#1a7ff4"/><rect x="22.6" y="29.2" width="1.7" height="1.7" fill="#eda33b"/><rect x="25.3" y="29.2" width="1.7" height="1.7" fill="#eda33b"/><rect x="28" y="29.2" width="1.7" height="1.7" fill="#eda33b"/></svg>
<div style="position:absolute;left:60px;top:58px;font-size:10px;line-height:10px;color:#4e4e4e;font-weight:normal;letter-spacing:0.39px;white-space:nowrap"><b style="color:#333;letter-spacing:0.75px">Tab Bar Controller</b> - A controller</div>
<div style="position:absolute;left:60px;top:71px;font-size:10px;line-height:10px;color:#4e4e4e;font-weight:normal;letter-spacing:0.39px;white-space:nowrap">that manages a set of view</div>
<div style="position:absolute;left:60px;top:84px;font-size:10px;line-height:10px;color:#4e4e4e;font-weight:normal;letter-spacing:0.39px;white-space:nowrap">controllers that represent tab bar ite<span style="font-size:7.5px;letter-spacing:0">…</span></div>
<div style="position:absolute;left:0px;top:106px;width:259px;height:63px;background:#e8e8e8;border-top:1px solid #cfcfcf;border-bottom:1px solid #cfcfcf"></div>
<svg style="position:absolute;left:9px;top:116px" width="44" height="44"><rect x="0.5" y="0.5" width="43" height="43" fill="#d9d9d9" stroke="#a3a3a3"/><path d="M8.600000000000001 7.6 V19.6 A4.8 3.2 0 0 0 18.2 19.6 V7.6" fill="#fff" stroke="#b4b4b4" stroke-width="0.9"/><ellipse cx="13.4" cy="7.6" rx="4.8" ry="3.2" fill="#fff" stroke="#b4b4b4" stroke-width="0.9"/><path d="M18.9 12.9 V20.9 A6.8 4.2 0 0 0 32.5 20.9 V12.9" fill="#fff" stroke="#b4b4b4" stroke-width="0.9"/><ellipse cx="25.7" cy="12.9" rx="6.8" ry="4.2" fill="#fff" stroke="#b4b4b4" stroke-width="0.9"/><path d="M4.5 18.2 V29.2 A4 2.5 0 0 0 12.5 29.2 V18.2" fill="#fff" stroke="#b4b4b4" stroke-width="0.9"/><ellipse cx="8.5" cy="18.2" rx="4" ry="2.5" fill="#fff" stroke="#b4b4b4" stroke-width="0.9"/><path d="M31.000000000000004 21.9 V27.4 A4.2 2.5 0 0 0 39.400000000000006 27.4 V21.9" fill="#fff" stroke="#b4b4b4" stroke-width="0.9"/><ellipse cx="35.2" cy="21.9" rx="4.2" ry="2.5" fill="#fff" stroke="#b4b4b4" stroke-width="0.9"/><path d="M10.600000000000001 26.4 V33.8 A10.2 6.4 0 0 0 31.0 33.8 V26.4" fill="#fff" stroke="#b4b4b4" stroke-width="0.9"/><ellipse cx="20.8" cy="26.4" rx="10.2" ry="6.4" fill="#fff" stroke="#b4b4b4" stroke-width="0.9"/><rect x="31" y="31" width="12.5" height="12.5" fill="#bdbdbd"/><text x="32.2" y="41.6" font-size="7.5" fill="#fff" font-family="Liberation Sans" letter-spacing="0.2">AR</text></svg>
<div style="position:absolute;left:60px;top:121px;font-size:10px;line-height:10px;color:#4e4e4e;font-weight:normal;letter-spacing:0.39px;white-space:nowrap"><b style="color:#2a2a2a;letter-spacing:0.75px">ARKit SceneKit View</b> - Display</div>
<div style="position:absolute;left:60px;top:134px;font-size:10px;line-height:10px;color:#4e4e4e;font-weight:normal;letter-spacing:0.39px;white-space:nowrap">SceneKit content with Augmented</div>
<div style="position:absolute;left:60px;top:147px;font-size:10px;line-height:10px;color:#4e4e4e;font-weight:normal;letter-spacing:0.39px;white-space:nowrap">Reality.</div>
<svg style="position:absolute;left:9px;top:179px" width="44" height="44"><rect x="0.5" y="0.5" width="43" height="43" fill="#d9d9d9" stroke="#a3a3a3"/><g fill="#fff" stroke="#b0b0b0" stroke-width="0.9"><ellipse cx="11.4" cy="13.7" rx="4.8" ry="3.2"/><ellipse cx="25.6" cy="15.3" rx="6.8" ry="4.2"/><ellipse cx="36" cy="21" rx="3.4" ry="2.3"/><ellipse cx="21.3" cy="27" rx="9.8" ry="8.5"/><ellipse cx="9.5" cy="22.8" rx="4.2" ry="2.5"/></g></svg>
<div style="position:absolute;left:60px;top:184px;font-size:10px;line-height:10px;color:#4e4e4e;font-weight:normal;letter-spacing:0.39px;white-space:nowrap"><b style="color:#2a2a2a;letter-spacing:0.75px">ARKit SpriteKit View</b> - Display</div>
<div style="position:absolute;left:60px;top:197px;font-size:10px;line-height:10px;color:#4e4e4e;font-weight:normal;letter-spacing:0.39px;white-space:nowrap">SpriteKit content with Augmented</div>
</div>
<svg style="position:absolute;left:756px;top:713px" width="13" height="13" viewBox="0 0 13 13"><g fill="none" stroke="#666"><rect x="0.5" y="0.5" width="5" height="5"/><rect x="7.5" y="0.5" width="5" height="5"/><rect x="0.5" y="7.5" width="5" height="5"/><rect x="7.5" y="7.5" width="5" height="5"/></g></svg>
<div style="position:absolute;left:776px;top:708px;width:226px;height:22px;background:#fff;border:1px solid #c6c6c6;border-radius:4px"></div>
<svg style="position:absolute;left:780px;top:712px" width="15" height="15" viewBox="0 0 15 15"><circle cx="7.5" cy="7.5" r="6.2" fill="none" stroke="#1a7ff4" stroke-width="2.1"/><path d="M4.5 5.6 H10.5 M5.5 7.6 H9.5 M6.5 9.6 H8.5" stroke="#1a7ff4" stroke-width="1.1"/></svg>
<div style="position:absolute;left:798px;top:714px;font-size:11px;line-height:11px;color:#1e1e1e;font-weight:normal;letter-spacing:0.2px;white-space:nowrap;">ar</div>
<svg style="position:absolute;left:986px;top:713px" width="12" height="12" viewBox="0 0 12 12"><circle cx="6" cy="6" r="5.5" fill="#7d7d7d"/><path d="M3.5 3.5 L8.5 8.5 M8.5 3.5 L3.5 8.5" stroke="#fff" stroke-width="1.1"/></svg>
</body></html>
